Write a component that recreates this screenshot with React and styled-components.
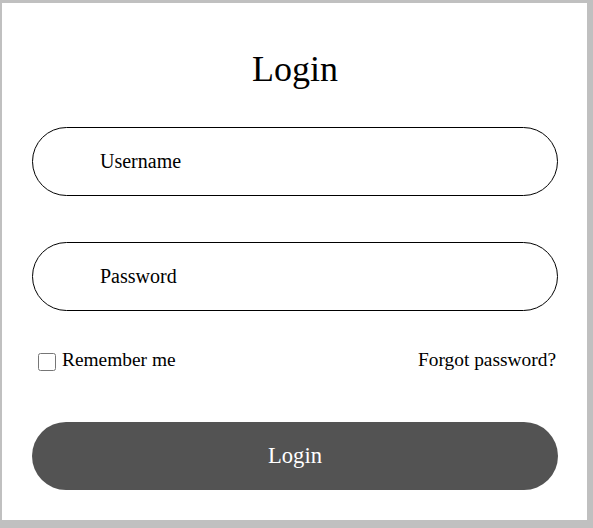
import React from "react";
import styled, { createGlobalStyle } from "styled-components";

const GlobalStyle = createGlobalStyle`
  html, body {
    margin: 0;
    padding: 0;
    background: #c0c0c0;
  }
  body {
    font-family: "Liberation Serif", "Times New Roman", serif;
  }
`;

const Page = styled.div`
  padding: 3px 6px 8px 2px;
  width: 593px;
  height: 528px;
  box-sizing: border-box;
`;

const Card = styled.form`
  background: #fff;
  height: 517px;
  width: 585px;
  box-sizing: border-box;
  padding: 46px 29px 0 30px;
  display: flex;
  flex-direction: column;
`;

const Title = styled.h1`
  margin: 0 0 38px;
  font-size: 36px;
  font-weight: normal;
  text-align: center;
  color: #000;
  line-height: 40px;
`;

const Field = styled.input`
  box-sizing: border-box;
  height: 69px;
  width: 100%;
  border: 1px solid #000;
  border-radius: 35px;
  padding: 0 0 0 67px;
  font-family: "Liberation Serif", "Times New Roman", serif;
  font-size: 20px;
  color: #000;
  outline: none;
  margin-bottom: ${(p) => p.$gap}px;

  &::placeholder {
    color: #000;
  }
`;

const OptionsRow = styled.div`
  display: flex;
  justify-content: space-between;
  align-items: center;
  padding: 0 2px 0 6px;
  height: 24px;
  font-size: 19.4px;
  color: #000;
`;

const CheckLabel = styled.label`
  display: flex;
  align-items: center;
  gap: 6px;
`;

const Check = styled.input`
  width: 18px;
  height: 18px;
  margin: 3px 0 0;
`;

const ForgotLink = styled.a`
  color: #000;
  text-decoration: none;
`;

const SubmitButton = styled.button`
  margin-top: 50px;
  height: 68px;
  width: 100%;
  border: none;
  border-radius: 34px;
  background: #535353;
  color: #fff;
  font-family: "Liberation Serif", "Times New Roman", serif;
  font-size: 22.6px;
`;

export default function App() {
  return (
    <Page>
      <GlobalStyle />
      <Card onSubmit={(e) => e.preventDefault()}>
        <Title>Login</Title>
        <Field type="text" placeholder="Username" $gap={46} />
        <Field type="password" placeholder="Password" $gap={37} />
        <OptionsRow>
          <CheckLabel>
            <Check type="checkbox" />
            Remember me
          </CheckLabel>
          <ForgotLink href="#">Forgot password?</ForgotLink>
        </OptionsRow>
        <SubmitButton type="submit">Login</SubmitButton>
      </Card>
    </Page>
  );
}
